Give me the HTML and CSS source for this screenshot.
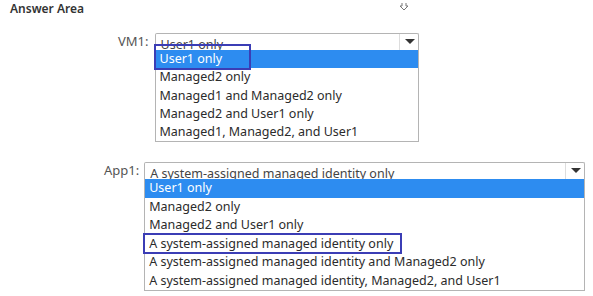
FILE: index.html
```html
<!DOCTYPE html>
<html lang="en">
<head>
    <meta charset="UTF-8">
    <title>Answer Area</title>
    <link rel="stylesheet" href="styles.css">
</head>
<body>
    <div class="page">
        <div class="header">
            <h1>Answer Area</h1>
            <svg class="cursor" width="10" height="8" viewBox="0 0 10 8">
                <path d="M3 0 V3 H1 L5 7 L9 3 H7 V0" fill="none" stroke="#777" stroke-width="1"/>
            </svg>
        </div>

        <div class="row row-vm">
            <span class="label">VM1:</span>
            <div class="dropdown dd-vm">
                <div class="select">
                    <span class="value">User1 only</span>
                    <span class="arrow"></span>
                </div>
                <ul class="options">
                    <li class="active">User1 only</li>
                    <li>Managed2 only</li>
                    <li>Managed1 and Managed2 only</li>
                    <li>Managed2 and User1 only</li>
                    <li>Managed1, Managed2, and User1</li>
                </ul>
                <div class="mark mark-vm"></div>
            </div>
        </div>

        <div class="row row-app">
            <span class="label">App1:</span>
            <div class="dropdown dd-app">
                <div class="select">
                    <span class="value">A system-assigned managed identity only</span>
                    <span class="arrow"></span>
                </div>
                <ul class="options">
                    <li class="active">User1 only</li>
                    <li>Managed2 only</li>
                    <li>Managed2 and User1 only</li>
                    <li>A system-assigned managed identity only</li>
                    <li>A system-assigned managed identity and Managed2 only</li>
                    <li>A system-assigned managed identity, Managed2, and User1</li>
                </ul>
                <div class="mark mark-app"></div>
            </div>
        </div>
    </div>
</body>
</html>
```

FILE: styles.css
```css
:root {
    --text: #2b2b2b;
    --muted: #555;
    --border: #b4b4b4;
    --highlight: #2d8cf0;
    --mark: #3b3db5;
}

body {
    margin: 0;
    background: #fff;
    font-family: "Noto Sans", "Open Sans", sans-serif;
    color: var(--text);
}

.page {
    width: 593px;
    height: 296px;
    overflow: hidden;
}

.header {
    display: flex;
    align-items: flex-start;
    padding: 2px 0 0 10px;
    height: 31px;
}

h1 {
    margin: 0;
    font-size: 12px;
    font-weight: 600;
    color: #333;
    line-height: 14px;
}

.cursor {
    margin: 1px 0 0 315px;
}

.row {
    display: flex;
    align-items: flex-start;
}

.row-vm {
    padding-left: 118px;
    height: 129px;
}

.row-app {
    padding-left: 104px;
}

.label {
    font-size: 13px;
    color: var(--muted);
    line-height: 15px;
    padding-top: 1px;
    margin-right: 6px;
}

.row-app .label {
    margin-right: 5px;
}

.dropdown {
    position: relative;
}

.dd-vm {
    width: 264px;
}

.dd-app {
    width: 441px;
}

.select {
    display: flex;
    height: 16px;
    border: 1px solid var(--border);
    border-bottom: none;
    border-radius: 2px 2px 0 0;
    overflow: hidden;
}

.value {
    flex: 1;
    font-size: 12.5px;
    color: #444;
    line-height: 16px;
    padding: 3px 0 0 5px;
    white-space: nowrap;
}

.arrow {
    width: 18px;
    border-left: 1px solid #ddd;
    position: relative;
}

.arrow::after {
    content: "";
    position: absolute;
    left: 5px;
    top: 5px;
    border-left: 5px solid transparent;
    border-right: 5px solid transparent;
    border-top: 5px solid #333;
}

.options {
    list-style: none;
    margin: 0;
    padding: 0;
    border: 1px solid var(--border);
    border-top: none;
    background: #fff;
}

.options li {
    font-size: 12.5px;
    line-height: 18.3px;
    padding-left: 4px;
    white-space: nowrap;
    color: var(--text);
}

.dd-app .options li {
    line-height: 18.5px;
    padding-left: 4px;
}

.options li.active {
    background: var(--highlight);
    color: #fff;
}

.mark {
    position: absolute;
    border: 2px solid var(--mark);
}

.mark-vm {
    left: -1px;
    top: 11px;
    width: 93px;
    height: 22px;
}

.mark-app {
    left: -1px;
    top: 71px;
    width: 255px;
    height: 17px;
}
```
